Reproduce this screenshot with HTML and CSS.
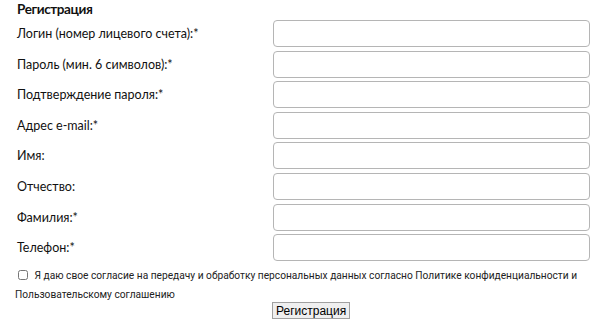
FILE: index.html
```html
<!DOCTYPE html>
<html>
<head>
<meta charset="utf-8">
<link rel="stylesheet" href="styles.css">
</head>
<body>
<div class="page">
  <h1 class="title">Регистрация</h1>
  <form class="form">
    <div class="row"><label class="label">Логин (номер лицевого счета):*</label><input class="field" type="text"></div>
    <div class="row"><label class="label">Пароль (мин. 6 символов):*</label><input class="field" type="password"></div>
    <div class="row"><label class="label">Подтверждение пароля:*</label><input class="field" type="password"></div>
    <div class="row"><label class="label">Адрес e-mail:*</label><input class="field" type="text"></div>
    <div class="row"><label class="label">Имя:</label><input class="field" type="text"></div>
    <div class="row"><label class="label">Отчество:</label><input class="field" type="text"></div>
    <div class="row"><label class="label">Фамилия:*</label><input class="field" type="text"></div>
    <div class="row"><label class="label">Телефон:*</label><input class="field" type="text"></div>
    <p class="agree"><input class="check" type="checkbox"> Я даю свое согласие на передачу и обработку персональных данных согласно Политике конфиденциальности и Пользовательскому соглашению</p>
    <div class="actions"><button class="submit" type="button">Регистрация</button></div>
  </form>
</div>
</body>
</html>
```
FILE: styles.css
```css
html, body {
  margin: 0;
  padding: 0;
  background: #ffffff;
}
.page {
  padding: 0 10px 0 17px;
  font-family: "Lato", "Liberation Sans", sans-serif;
  color: #111111;
}
.title {
  margin: 0;
  font-size: 13.5px;
  font-weight: bold;
  letter-spacing: -0.4px;
  line-height: 18px;
  height: 20px;
}
.form {
  display: flex;
  flex-direction: column;
  gap: 3.6px;
}
.row {
  display: grid;
  grid-template-columns: 256px 317px;
  align-items: center;
}
.label {
  font-size: 12.5px;
}
.field {
  box-sizing: border-box;
  width: 317px;
  height: 27px;
  margin: 0;
  border: 1px solid #b5b5b5;
  border-radius: 4px;
  background: #ffffff;
}
.agree {
  margin: 0 -10px 0 -2px;
  padding-top: 1px;
  font-family: "Roboto", sans-serif;
  font-size: 10.2px;
  line-height: 19px;
  color: #222222;
}
.check {
  margin: 0 4px 0 3px;
  width: 10px;
  height: 10px;
  vertical-align: -1px;
}
.actions {
  display: flex;
  padding-left: 255px;
  margin-top: -5px;
}
.submit {
  font-family: "Liberation Sans", Arial, sans-serif;
  font-size: 12px;
  height: 17px;
  padding: 0 3px;
  line-height: 14px;
  border: 1px solid #a0a0a0;
  background: #efefef;
  color: #000000;
}
```
